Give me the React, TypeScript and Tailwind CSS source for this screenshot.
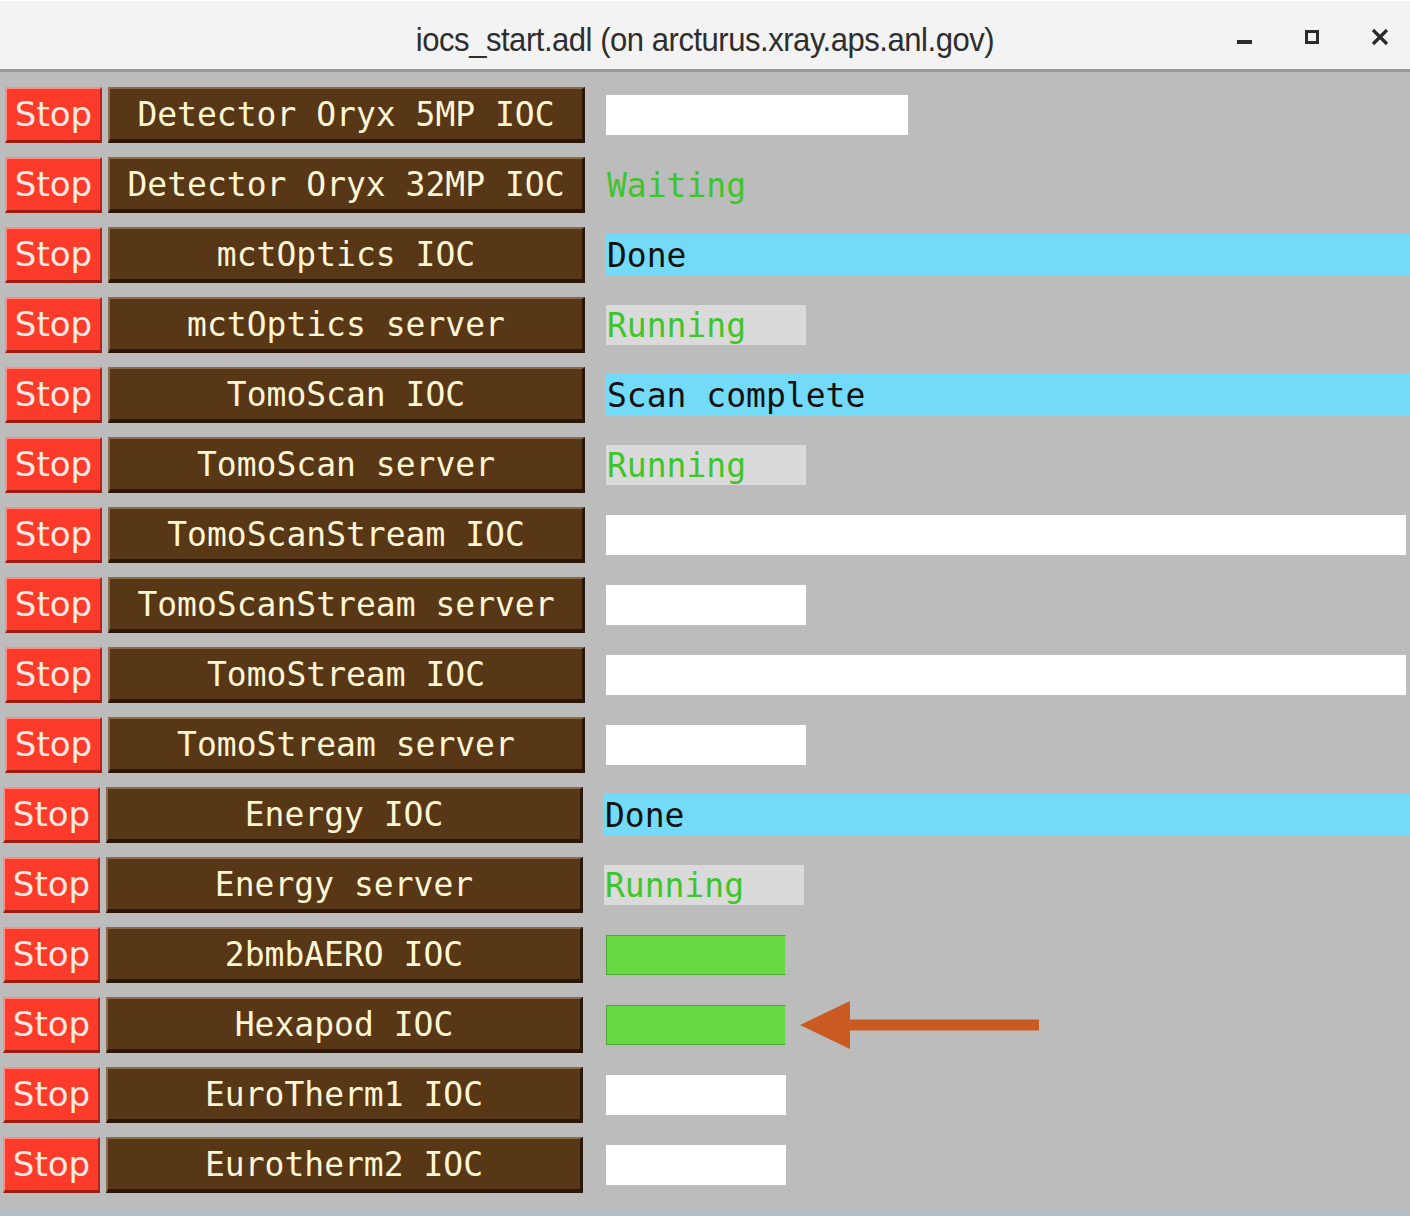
import React from "react";

type Status =
  | { kind: "white"; w: string }
  | { kind: "none"; text: string; color: string }
  | { kind: "cyan"; text: string }
  | { kind: "gray"; text: string }
  | { kind: "green" };

const rows: { name: string; status: Status; shift?: boolean; sshift?: boolean; arrow?: boolean }[] = [
  { name: "Detector Oryx 5MP IOC", status: { kind: "white", w: "w-[302px]" } },
  { name: "Detector Oryx 32MP IOC", status: { kind: "none", text: "Waiting", color: "text-[#3fc42c]" } },
  { name: "mctOptics IOC", status: { kind: "cyan", text: "Done" } },
  { name: "mctOptics server", status: { kind: "gray", text: "Running" } },
  { name: "TomoScan IOC", status: { kind: "cyan", text: "Scan complete" } },
  { name: "TomoScan server", status: { kind: "gray", text: "Running" } },
  { name: "TomoScanStream IOC", status: { kind: "white", w: "w-[800px]" } },
  { name: "TomoScanStream server", status: { kind: "white", w: "w-[200px]" } },
  { name: "TomoStream IOC", status: { kind: "white", w: "w-[800px]" } },
  { name: "TomoStream server", status: { kind: "white", w: "w-[200px]" } },
  { name: "Energy IOC", status: { kind: "cyan", text: "Done" }, shift: true },
  { name: "Energy server", status: { kind: "gray", text: "Running" }, shift: true },
  { name: "2bmbAERO IOC", status: { kind: "green" }, shift: true, sshift: true },
  { name: "Hexapod IOC", status: { kind: "green" }, shift: true, sshift: true, arrow: true },
  { name: "EuroTherm1 IOC", status: { kind: "white", w: "w-[180px]" }, shift: true, sshift: true },
  { name: "Eurotherm2 IOC", status: { kind: "white", w: "w-[180px]" }, shift: true, sshift: true },
];

const mono = "font-['DejaVu_Sans_Mono',monospace] text-[33px] leading-none";

function StatusCell({ s }: { s: Status }) {
  if (s.kind === "white") return <div className={`h-[40px] bg-white ${s.w}`} />;
  if (s.kind === "green")
    return <div className="h-[40px] w-[180px] bg-[#66d943] border border-[#4ea434] border-r-[#7cf060]" />;
  if (s.kind === "none")
    return <div className={`h-[40px] flex items-center pl-[1px] ${mono} ${s.color}`}>{s.text}</div>;
  if (s.kind === "cyan")
    return (
      <div className={`h-[42px] flex-1 bg-[#73dbf7] flex items-center pl-[1px] ${mono} text-[#111]`}>{s.text}</div>
    );
  return (
    <div className={`h-[40px] w-[200px] bg-[#dadada] flex items-center pl-[1px] ${mono} text-[#3fc42c]`}>{s.text}</div>
  );
}

export default function App() {
  return (
    <div className="w-[1410px] h-[1216px] bg-[#bcbcbc] flex flex-col overflow-hidden">
      <div className="h-[72px] shrink-0 bg-[#f3f3f3] border-b-[3px] border-[#999] border-t border-t-white flex items-center relative">
        <div className="absolute left-0 right-0 text-center font-['Liberation_Sans',sans-serif] text-[33px] text-[#2e2e2e] tracking-[-0.5px] scale-x-[0.94] top-[14px]">
          iocs_start.adl (on arcturus.xray.aps.anl.gov)
        </div>
        <div className="absolute left-[1237px] top-[39px] w-[15px] h-[4px] bg-[#2b2b2b]" />
        <div className="absolute left-[1305px] top-[29px] w-[14px] h-[14px] border-[3px] border-[#2b2b2b]" />
        <svg className="absolute left-[1371px] top-[27px]" width="18" height="18" viewBox="0 0 18 18">
          <path d="M2 2 L16 16 M16 2 L2 16" stroke="#2b2b2b" strokeWidth="3.2" />
        </svg>
      </div>
      <div className="pt-[8px] flex flex-col">
        {rows.map((r, i) => (
          <div key={i} className={`h-[70px] flex items-center ${r.shift ? "pl-[3px]" : "pl-[5px]"} relative`}>
            <div className="w-[97px] h-[56px] bg-[#fd3b2b] border-t-2 border-l-2 border-[#ff8c82] border-b-[3px] border-r-2 border-b-[#9c1d12] border-r-[#b0241a] flex items-center justify-center font-['DejaVu_Sans',sans-serif] font-normal text-[34px] leading-none text-[#ffeae4] pb-[2px]">
              Stop
            </div>
            <div className="ml-[6px] w-[477px] h-[56px] bg-[#583716] border-t-2 border-l-2 border-[#8a6a4a] border-b-4 border-r-[3px] border-b-[#2a1708] border-r-[#2a1708] flex items-center justify-center">
              <span className={`${mono} text-[#fff6d6] whitespace-pre`}>{r.name}</span>
            </div>
            <div className={`${r.sshift ? "ml-[23px]" : "ml-[21px]"} flex-1 flex items-center`}>
              <StatusCell s={r.status} />
            </div>
            {r.arrow && (
              <svg className="absolute left-[800px] top-[10px]" width="242" height="52" viewBox="0 0 242 52">
                <polygon points="0,25 50,1 50,49" fill="#c85a22" />
                <rect x="48" y="19.5" width="191" height="11" fill="#c85a22" />
              </svg>
            )}
          </div>
        ))}
      </div>
      <div className="mt-auto h-[5px] bg-[#b4bec6]" />
    </div>
  );
}
